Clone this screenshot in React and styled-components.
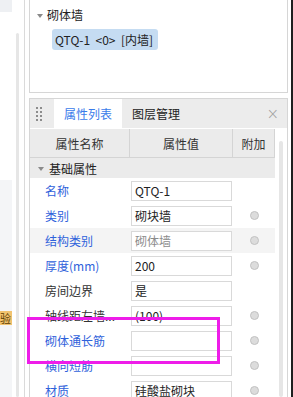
import React from 'react';
import styled, { createGlobalStyle } from 'styled-components';

const GlobalStyle = createGlobalStyle`
  html, body {
    margin: 0;
    padding: 0;
    background: #fff;
  }
  body {
    width: 293px;
    height: 397px;
    overflow: hidden;
    font-family: "Noto Sans CJK SC", "Noto Sans", sans-serif;
    font-size: 12px;
    color: #333;
  }
  * {
    box-sizing: border-box;
  }
`;

const rows = [
  { label: '名称', value: 'QTQ-1', blue: true, dot: false },
  { label: '类别', value: '砌块墙', blue: true, dot: true },
  { label: '结构类别', value: '砌体墙', blue: true, dot: true, muted: true },
  { label: '厚度(mm)', value: '200', blue: true, dot: true },
  { label: '房间边界', value: '是', blue: false, dot: false },
  { label: '轴线距左墙...', value: '(100)', blue: false, dot: true },
  { label: '砌体通长筋', value: '', blue: true, dot: true },
  { label: '横向短筋', value: '', blue: true, dot: true },
  { label: '材质', value: '硅酸盐砌块', blue: true, dot: true },
];

const App = () => {
  return (
    <>
      <GlobalStyle />
      <Screen>
        <LeftStrip>
          <LeftCol>
            <CornerBox />
            <LowerArea>
              <Badge>检验</Badge>
            </LowerArea>
          </LeftCol>
          <LeftScroll />
        </LeftStrip>

        <Main>
          <TreePanel>
            <TreeGroup>
              <Caret />
              砌体墙
            </TreeGroup>
            <TreeNode>QTQ-1&nbsp; &lt;0&gt;&nbsp; [内墙]</TreeNode>
          </TreePanel>

          <PropPanel>
            <TabBar>
              <Handle>
                {Array.from({ length: 8 }).map((_, i) => (
                  <span key={i} />
                ))}
              </Handle>
              <Tab $active>属性列表</Tab>
              <Tab>图层管理</Tab>
              <Close>×</Close>
            </TabBar>

            <PropBody>
              <Table>
                <HeadRow>
                  <HeadCell $w={100}>属性名称</HeadCell>
                  <HeadCell $w={103}>属性值</HeadCell>
                  <HeadCell $w={42}>附加</HeadCell>
                </HeadRow>
                <SectionRow>
                  <Caret />
                  基础属性
                </SectionRow>
                {rows.map((r) => (
                  <PropRow key={r.label} $shaded={r.muted}>
                    <Label $blue={r.blue}>{r.label}</Label>
                    <ValueCell>
                      <ValueBox $muted={r.muted}>{r.value}</ValueBox>
                    </ValueCell>
                    <ExtraCell>{r.dot && <Dot />}</ExtraCell>
                  </PropRow>
                ))}
              </Table>
              <ScrollTrack />
            </PropBody>
          </PropPanel>
        </Main>

        <EdgeGap />
        <DarkEdge />

        <Highlight />
      </Screen>
    </>
  );
};

const Screen = styled.div`
  position: relative;
  display: flex;
  width: 293px;
  height: 397px;
  overflow: hidden;
`;

const LeftStrip = styled.div`
  display: flex;
  width: 29px;
  flex-shrink: 0;
  border-right: 4px solid #fff;
  position: relative;

  &::after {
    content: '';
    position: absolute;
    top: 0;
    bottom: 0;
    left: 24px;
    width: 1px;
    background: #dadada;
  }
`;

const LeftCol = styled.div`
  display: flex;
  flex-direction: column;
  width: 12px;
  overflow: hidden;
`;

const CornerBox = styled.div`
  height: 12px;
  background: #eef0f3;
`;

const LowerArea = styled.div`
  margin-top: 168px;
  flex: 1;
  background: #f4f5f7;
  padding-top: 131px;
  display: flex;
  justify-content: flex-end;
  align-items: flex-start;
`;

const Badge = styled.div`
  flex-shrink: 0;
  height: 14px;
  line-height: 14px;
  padding: 0 1px 0 4px;
  background: #f1c36f;
  color: #5a3b00;
  font-size: 11px;
  white-space: nowrap;
  border-radius: 2px 0 0 2px;
`;

const LeftScroll = styled.div`
  width: 3px;
  margin: 33px 0 0 4px;
  background: #e6e6e6;
  border-radius: 2px;
`;

const Main = styled.div`
  display: flex;
  flex-direction: column;
  gap: 5px;
  width: 259px;
  flex-shrink: 0;
`;

const TreePanel = styled.div`
  height: 93px;
  flex-shrink: 0;
  border: 1px solid #d6d6d6;
  border-top: none;
  background: #fff;
  padding: 7px 0 0 7px;
`;

const TreeGroup = styled.div`
  display: flex;
  align-items: center;
  gap: 4px;
  height: 16px;
  line-height: 16px;
  color: #222;
`;

const Caret = styled.span`
  width: 0;
  height: 0;
  border-left: 3px solid transparent;
  border-right: 3px solid transparent;
  border-top: 4px solid #8a8a8a;
  margin-top: 1px;
`;

const TreeNode = styled.div`
  display: inline-block;
  margin: 6px 0 0 15px;
  height: 21px;
  line-height: 21px;
  padding: 0 5px 0 3px;
  border-radius: 3px;
  background: #c5dcf2;
  color: #222;
  white-space: nowrap;
`;

const PropPanel = styled.div`
  flex: 1;
  display: flex;
  flex-direction: column;
  border: 1px solid #d6d6d6;
  border-bottom: none;
  background: #fff;
  min-height: 0;
`;

const TabBar = styled.div`
  display: flex;
  align-items: stretch;
  height: 29px;
  background: #ececec;
  flex-shrink: 0;
`;

const Handle = styled.div`
  display: grid;
  grid-template-columns: repeat(2, 2px);
  grid-auto-rows: 2px;
  column-gap: 2px;
  row-gap: 2px;
  align-content: center;
  padding: 0 12px 0 6px;

  span {
    background: #8c8c8c;
  }
`;

const Tab = styled.div`
  width: ${(p) => (p.$active ? '68px' : 'auto')};
  padding: ${(p) => (p.$active ? '0' : '0 0 0 10px')};
  display: flex;
  align-items: center;
  justify-content: ${(p) => (p.$active ? 'center' : 'flex-start')};
  background: ${(p) => (p.$active ? '#fff' : 'transparent')};
  color: ${(p) => (p.$active ? '#3a7bea' : '#222')};
  font-size: 12px;
`;

const Close = styled.div`
  margin-left: auto;
  padding-right: 8px;
  display: flex;
  align-items: center;
  color: #a0a0a0;
  font-size: 15px;
  font-family: "DejaVu Sans", sans-serif;
  font-weight: 300;
`;

const PropBody = styled.div`
  flex: 1;
  display: flex;
  min-height: 0;
`;

const Table = styled.div`
  width: 245px;
  display: flex;
  flex-direction: column;
  padding-top: 1px;
`;

const HeadRow = styled.div`
  display: flex;
  flex-shrink: 0;
  height: 29px;
  background: #ebebeb;
  border-bottom: 1px solid #d4d4d4;
`;

const HeadCell = styled.div`
  width: ${(p) => p.$w}px;
  display: flex;
  align-items: center;
  justify-content: center;
  border-right: 1px solid #d4d4d4;
  color: #333;
`;

const SectionRow = styled.div`
  display: flex;
  flex-shrink: 0;
  align-items: center;
  gap: 5px;
  height: 20px;
  padding-left: 8px;
  background: #ebebeb;
  color: #222;
`;

const PropRow = styled.div`
  display: flex;
  flex-shrink: 0;
  align-items: center;
  height: 25px;
  background: ${(p) => (p.$shaded ? '#f4f4f4' : 'transparent')};
`;

const Label = styled.div`
  width: 100px;
  padding-left: 15px;
  white-space: nowrap;
  overflow: hidden;
  color: ${(p) => (p.$blue ? '#2f62db' : '#333')};
`;

const ValueCell = styled.div`
  width: 103px;
  padding-left: 1px;
`;

const ValueBox = styled.div`
  width: 101px;
  height: 20px;
  line-height: 18px;
  padding-left: 3px;
  border: 1px solid #d9d9d9;
  background: #fff;
  color: ${(p) => (p.$muted ? '#8c8c8c' : '#222')};
  white-space: nowrap;
  overflow: hidden;
`;

const ExtraCell = styled.div`
  width: 42px;
  display: flex;
  justify-content: center;
  padding-left: 1px;
`;

const Dot = styled.span`
  width: 9px;
  height: 9px;
  border-radius: 50%;
  background: #dcdcdc;
  border: 1px solid #c2c2c2;
`;

const ScrollTrack = styled.div`
  width: 4px;
  margin: 13px 0 0 4px;
  background: #e6e6e6;
  border-radius: 2px;
`;

const EdgeGap = styled.div`
  width: 3px;
  flex-shrink: 0;
`;

const DarkEdge = styled.div`
  width: 2px;
  flex-shrink: 0;
  background: #1f1f1f;
`;

const Highlight = styled.div`
  position: absolute;
  left: 27px;
  top: 317px;
  width: 193px;
  height: 47px;
  border: 3px solid #ee1de9;
  pointer-events: none;
`;

export default App;
